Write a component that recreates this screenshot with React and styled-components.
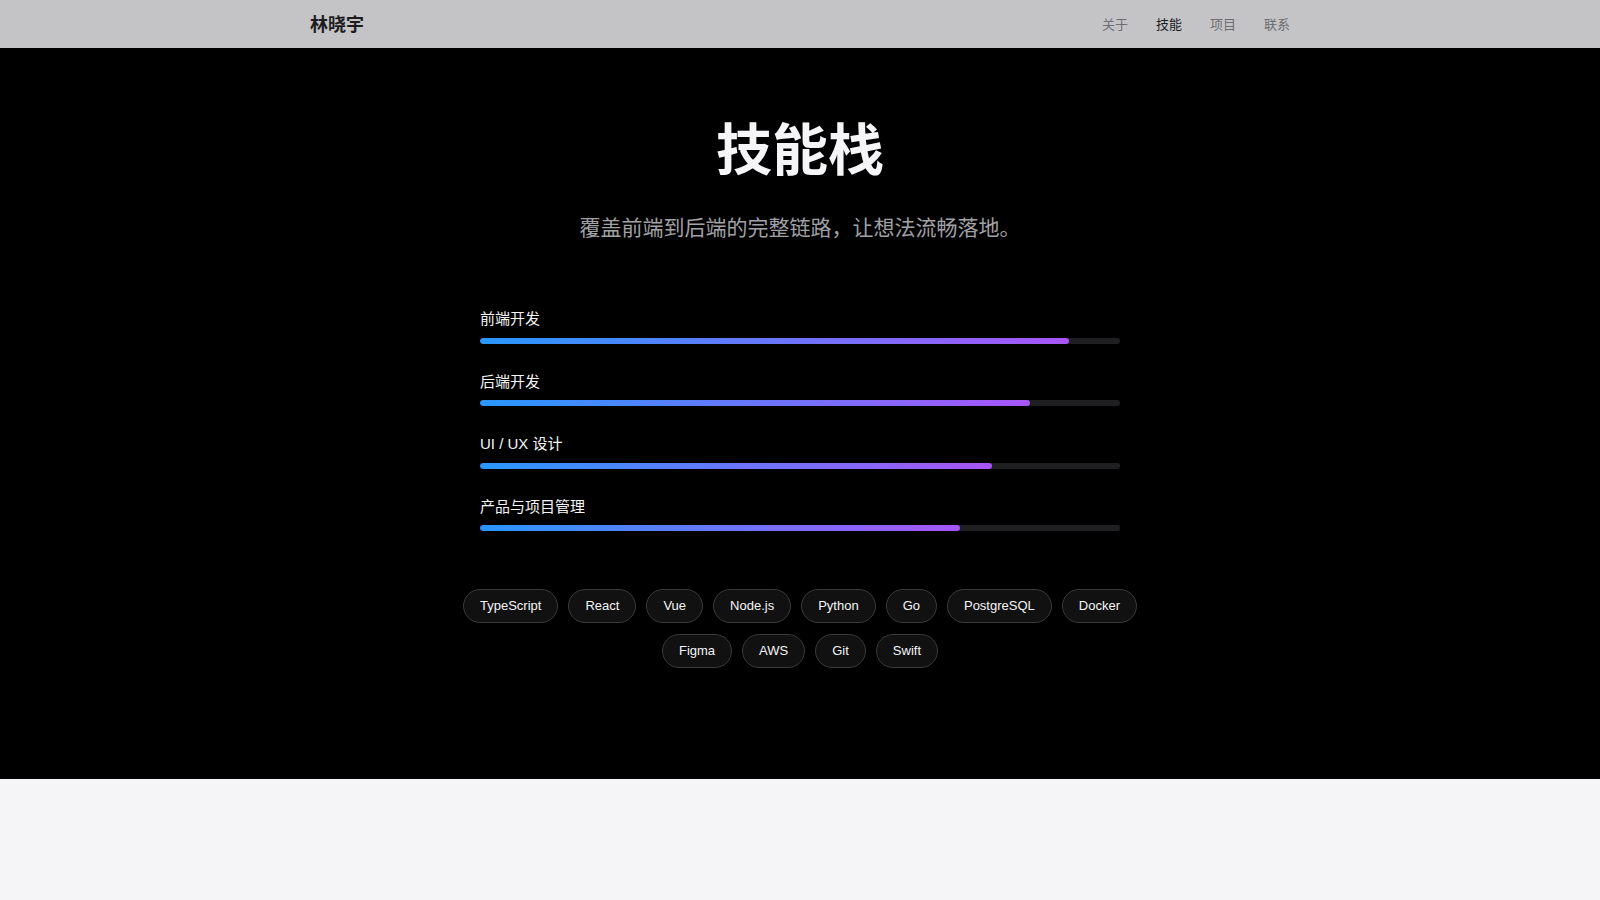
import React from 'react';
import styled, { createGlobalStyle } from 'styled-components';

const GlobalStyle = createGlobalStyle`
  * { box-sizing: border-box; }
  html, body {
    margin: 0;
    padding: 0;
    background: #f5f5f7;
    font-family: "Liberation Sans", "Noto Sans CJK SC", sans-serif;
  }
`;

const Header = styled.header`
  height: 48px;
  background: #c4c4c6;
`;

const HeaderInner = styled.div`
  max-width: 980px;
  height: 100%;
  margin: 0 auto;
  padding-bottom: 2px;
  display: flex;
  align-items: center;
  justify-content: space-between;
`;

const Logo = styled.div`
  font-size: 18px;
  font-weight: 700;
  color: #1d1d1f;
`;

const Nav = styled.nav`
  display: flex;
  gap: 28px;
`;

const NavLink = styled.a`
  font-size: 13px;
  font-weight: 400;
  color: ${(p) => (p.$active ? '#1d1d1f' : '#6e6e73')};
  text-decoration: none;
`;

const Section = styled.section`
  background: #000;
  padding: 72px 0 111px;
  display: flex;
  flex-direction: column;
  align-items: center;
`;

const Title = styled.h1`
  margin: 0 0 30px;
  font-size: 56px;
  line-height: 1.1;
  font-weight: 700;
  color: #f5f5f7;
`;

const Subtitle = styled.p`
  margin: 0;
  font-size: 21px;
  line-height: 1.5;
  color: #a1a1a6;
`;

const SkillList = styled.div`
  width: 640px;
  margin-top: 65px;
  display: flex;
  flex-direction: column;
  gap: 27px;
`;

const Skill = styled.div`
  display: flex;
  flex-direction: column;
  gap: 7px;
`;

const SkillName = styled.div`
  font-size: 15px;
  line-height: 22.5px;
  color: #f5f5f7;
`;

const Track = styled.div`
  height: 6px;
  border-radius: 3px;
  background: #1f1f21;
  overflow: hidden;
`;

const Fill = styled.div`
  height: 100%;
  border-radius: 3px;
  background: linear-gradient(90deg, #2997ff, #a855f7);
`;

const Tags = styled.div`
  margin-top: 58px;
  max-width: 700px;
  display: flex;
  flex-wrap: wrap;
  justify-content: center;
  gap: 11px 10px;
`;

const Tag = styled.span`
  padding: 7px 16px;
  font-size: 13px;
  line-height: 18px;
  color: #f5f5f7;
  background: #111112;
  border: 1px solid #3a3a3c;
  border-radius: 17px;
`;

const Footer = styled.div`
  height: 121px;
  background: #f5f5f7;
`;

const skills = [
  { name: '前端开发', level: 92 },
  { name: '后端开发', level: 86 },
  { name: 'UI / UX 设计', level: 80 },
  { name: '产品与项目管理', level: 75 },
];

const tags = ['TypeScript', 'React', 'Vue', 'Node.js', 'Python', 'Go', 'PostgreSQL', 'Docker', 'Figma', 'AWS', 'Git', 'Swift'];

export default function App() {
  return (
    <>
      <GlobalStyle />
      <Header>
        <HeaderInner>
          <Logo>林晓宇</Logo>
          <Nav>
            <NavLink href="#about">关于</NavLink>
            <NavLink href="#skills" $active>技能</NavLink>
            <NavLink href="#projects">项目</NavLink>
            <NavLink href="#contact">联系</NavLink>
          </Nav>
        </HeaderInner>
      </Header>
      <Section id="skills">
        <Title>技能栈</Title>
        <Subtitle>覆盖前端到后端的完整链路，让想法流畅落地。</Subtitle>
        <SkillList>
          {skills.map((s) => (
            <Skill key={s.name}>
              <SkillName>{s.name}</SkillName>
              <Track>
                <Fill style={{ width: `${s.level}%` }} />
              </Track>
            </Skill>
          ))}
        </SkillList>
        <Tags>
          {tags.map((t) => (
            <Tag key={t}>{t}</Tag>
          ))}
        </Tags>
      </Section>
      <Footer />
    </>
  );
}
